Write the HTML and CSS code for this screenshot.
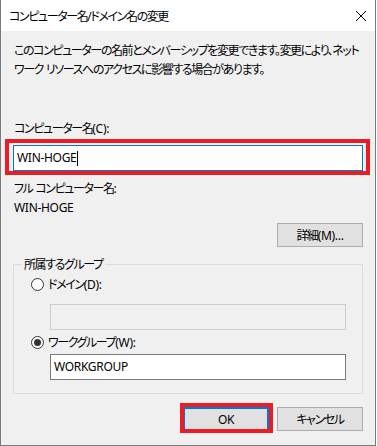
FILE: index.html
```html
<!DOCTYPE html>
<html lang="ja">
<head>
    <meta charset="UTF-8">
    <title>コンピューター名/ドメイン名の変更</title>
    <link rel="stylesheet" href="styles.css">
</head>
<body>

    <div class="window">
        <!-- Title bar -->
        <div class="titlebar">
            <span class="title jp">コンピューター名/ドメイン名の変更</span>
            <svg class="close" width="10" height="10" viewBox="0 0 10 10">
                <path d="M0 0 L10 10 M10 0 L0 10" stroke="#000" stroke-width="1" fill="none"/>
            </svg>
        </div>

        <div class="content">
            <p class="desc jp">このコンピューターの名前とメンバーシップを変更できます。変更により、ネット<br>ワーク<span class="en"> </span>リソースへのアクセスに影響する場合があります。</p>

            <div class="label label-name jp">コンピューター名<span class="en">(C):</span></div>
            <div class="field marked">
                <div class="input focused">WIN-HOGE<span class="caret"></span></div>
            </div>

            <div class="label label-full jp">フル<span class="en"> </span>コンピューター名:</div>
            <div class="label">WIN-HOGE</div>

            <div class="row-right row-detail">
                <div class="btn jp">詳細<span class="en">(M)...</span></div>
            </div>

            <!-- Member of -->
            <fieldset class="group">
                <legend class="jp">所属するグループ</legend>
                <div class="radio-row first jp">
                    <span class="radio"></span>ドメイン<span class="en">(D):</span>
                </div>
                <div class="input sub disabled"></div>
                <div class="radio-row jp">
                    <span class="radio checked"></span>ワークグループ<span class="en">(W):</span>
                </div>
                <div class="input sub wg">WORKGROUP</div>
            </fieldset>

            <div class="row-right buttons">
                <div class="btn default marked">OK</div>
                <div class="btn jp">キャンセル</div>
            </div>
        </div>
    </div>

</body>
</html>
```

FILE: styles.css
```css
body {
    margin: 0;
    background-color: #ffffff;
    font-family: "Noto Sans", "Noto Sans CJK JP", sans-serif;
    font-size: 12px;
    letter-spacing: -0.3px;
    color: #000000;
}

/* Japanese text: narrower, like Yu Gothic UI */
.jp {
    font-feature-settings: "palt";
    letter-spacing: -1.4px;
}

.jp .en {
    letter-spacing: -0.3px;
}

/* Window frame */
.window {
    width: 376px;
    height: 446px;
    box-sizing: border-box;
    border: 1px solid #7a7a7a;
    border-top: none;
    background-color: #f0f0f0;
    display: flex;
    flex-direction: column;
}

.titlebar {
    height: 31px;
    background-color: #ffffff;
    display: flex;
    align-items: center;
    justify-content: space-between;
    padding: 0 9px 0 8px;
}

.close {
    margin-top: 1px;
}

.content {
    padding: 0 12px;
}

.desc {
    margin: 10px 0 0 1px;
    line-height: 19px;
    white-space: nowrap;
}

.label {
    line-height: 19px;
    margin-left: 1px;
}

.label-name {
    margin-top: 40px;
}

.label-full {
    margin-top: 8px;
}

/* Text boxes */
.field {
    margin-top: 7px;
}

.input {
    height: 26px;
    box-sizing: border-box;
    border: 1px solid #7a7a7a;
    background-color: #ffffff;
    padding: 0 3px;
    line-height: 24px;
    display: flex;
    align-items: center;
}

.input.focused {
    border-color: #0078d7;
}

.caret {
    width: 1px;
    height: 15px;
    background-color: #000000;
}

.input.sub {
    margin-left: 36px;
    width: 296px;
}

.input.disabled {
    border-color: #cccccc;
    background-color: #f0f0f0;
    margin-top: 10px;
}

.input.wg {
    margin-top: 2px;
}

/* Red annotation boxes drawn over the controls */
.marked {
    position: relative;
}

.marked::after {
    content: "";
    position: absolute;
    top: -6px;
    left: -8px;
    right: -7px;
    bottom: -4px;
    border: 4px solid #ed1c24;
}

.btn.marked::after {
    left: -5px;
    right: -6px;
}

/* Buttons */
.row-right {
    display: flex;
    justify-content: flex-end;
    gap: 8px;
}

.row-detail {
    margin-top: 6px;
}

.btn {
    width: 86px;
    height: 24px;
    box-sizing: border-box;
    border: 1px solid #adadad;
    background-color: #e1e1e1;
    display: flex;
    align-items: center;
    justify-content: center;
}

.btn.default {
    border: 2px solid #0078d7;
}

.buttons {
    margin-top: 13px;
}

/* Group box */
.group {
    margin: 8px 0 0 0;
    padding: 0 0 13px 0;
    border: 1px solid #dcdcdc;
    min-width: 0;
}

.group legend {
    margin-left: 8px;
    padding: 0 2px;
    line-height: 19px;
}

.radio-row {
    display: flex;
    align-items: center;
    line-height: 19px;
    padding-left: 17px;
    margin-top: 3px;
}

.radio-row.first {
    margin-top: 1px;
}

.radio {
    width: 13px;
    height: 13px;
    box-sizing: border-box;
    border: 1px solid #333333;
    border-radius: 50%;
    background-color: #ffffff;
    margin-right: 4px;
    display: flex;
    align-items: center;
    justify-content: center;
}

.radio.checked::before {
    content: "";
    width: 7px;
    height: 7px;
    border-radius: 50%;
    background-color: #333333;
}
```
